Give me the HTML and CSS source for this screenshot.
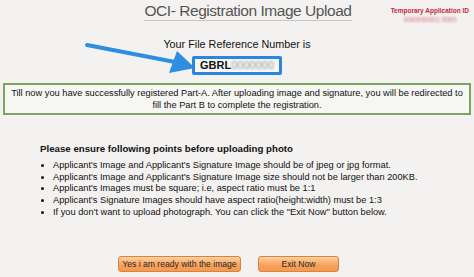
FILE: index.html
```html
<!DOCTYPE html>
<html>
<head>
<meta charset="utf-8">
<link rel="stylesheet" href="styles.css">
</head>
<body>
<div class="page">
  <header class="top">
    <h1 class="title">OCI- Registration Image Upload</h1>
    <div class="tempid">
      <div class="tempid-label">Temporary Application ID</div>
      <div class="tempid-value">0000000001 0000</div>
    </div>
  </header>

  <section class="ref">
    <div class="ref-label">Your File Reference Number is</div>
    <div class="ref-box"><b>GBRL</b><span class="blur">0000000</span></div>
    <svg class="arrow" width="120" height="34" viewBox="0 0 120 34">
      <line x1="4" y1="4" x2="92" y2="21" stroke="#2f8de4" stroke-width="4" stroke-linecap="round"/>
      <polygon points="112,27 86,32 94,10" fill="#2f8de4"/>
    </svg>
  </section>

  <div class="notice">Till now you have successfully registered Part-A. After uploading image and signature, you will be redirected to<br>fill the Part B to complete the registration.</div>

  <section class="points">
    <h2 class="points-title">Please ensure following points before uploading photo</h2>
    <ul class="points-list">
      <li>Applicant's Image and Applicant's Signature Image should be of jpeg or jpg format.</li>
      <li>Applicant's Image and Applicant's Signature Image size should not be larger than 200KB.</li>
      <li>Applicant's Images must be square; i.e, aspect ratio must be 1:1</li>
      <li>Applicant's Signature Images should have aspect ratio(height:width) must be 1:3</li>
      <li>If you don't want to upload photograph. You can click the "Exit Now" button below.</li>
    </ul>
  </section>

  <div class="actions">
    <button class="btn btn-yes">Yes i am ready with the image</button>
    <button class="btn btn-exit">Exit Now</button>
  </div>
</div>
</body>
</html>
```

FILE: styles.css
```css
* { box-sizing: border-box; }
html, body { margin: 0; padding: 0; }
body {
  background: #f3f2f0;
  font-family: "Liberation Sans", Arial, sans-serif;
  color: #111;
  width: 474px;
  height: 277px;
  overflow: hidden;
}
.page { position: relative; padding: 0 3px; }

.top {
  position: relative;
  display: flex;
  justify-content: center;
  padding-left: 22px;
  height: 30px;
}
.title {
  margin: 3px 0 0;
  font-weight: normal;
  font-size: 15.5px;
  letter-spacing: -0.45px;
  color: #555;
  line-height: 16px;
  border-bottom: 1px solid #c4c4c4;
  padding-bottom: 1px;
  white-space: nowrap;
  align-self: flex-start;
}
.tempid {
  position: absolute;
  right: 2px;
  top: 7px;
  text-align: center;
}
.tempid-label {
  color: #c8283a;
  font-weight: bold;
  font-size: 6.5px;
  line-height: 8px;
  white-space: nowrap;
}
.tempid-value {
  color: #d56a7a;
  font-size: 6.5px;
  line-height: 9px;
  filter: blur(1.2px);
}

.ref {
  position: relative;
  display: flex;
  flex-direction: column;
  align-items: center;
  padding-top: 7px;
}
.ref-label {
  font-size: 10.8px;
  line-height: 14px;
  color: #111;
}
.ref-box {
  margin-top: 5px;
  width: 90px;
  height: 19px;
  border: 3px solid #2a86e0;
  border-radius: 2px;
  background: #f7f7f7;
  font-size: 11px;
  line-height: 13px;
  padding-left: 5px;
  display: flex;
  align-items: center;
}
.ref-box b { color: #111; }
.blur { color: #9a9a9a; filter: blur(1.3px); }
.arrow {
  position: absolute;
  left: 80px;
  top: 11px;
}

.notice {
  margin-top: 8px;
  border: 2px solid #7fa363;
  background: #f6f6f3;
  text-align: center;
  font-size: 9.25px;
  line-height: 12px;
  padding: 2px 2px 2px;
  color: #111;
  white-space: nowrap;
}

.points { padding: 28px 0 0 37px; }
.points-title {
  margin: 0;
  font-size: 9.7px;
  font-weight: bold;
  line-height: 12px;
}
.points-list {
  margin: 5px 0 0;
  padding: 0 0 0 13px;
  font-size: 9.25px;
  line-height: 11.7px;
}

.actions {
  display: flex;
  justify-content: center;
  gap: 17px;
  margin-top: 37px;
  padding-right: 17px;
}
.btn {
  height: 16px;
  border: 1px solid #d9843e;
  border-radius: 3px;
  background: linear-gradient(#ffd1a1, #f7a059 60%, #f39a50);
  font-family: "Liberation Sans", Arial, sans-serif;
  font-size: 8.6px;
  color: #2a2a2a;
  padding: 0;
  white-space: nowrap;
}
.btn-yes { width: 123px; }
.btn-exit { width: 81px; }
```
